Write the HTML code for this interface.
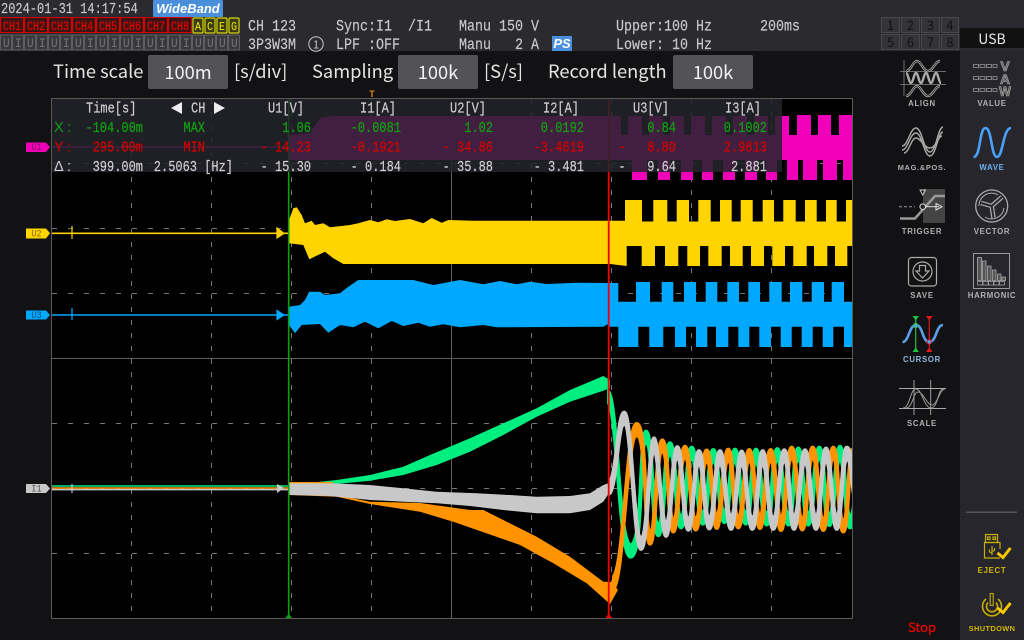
<!DOCTYPE html>
<html><head><meta charset="utf-8"><title>Wave</title>
<style>
html,body{margin:0;padding:0;background:#111;width:1024px;height:640px;overflow:hidden}
svg{display:block}
.m{font-family:"Liberation Mono","DejaVu Sans Mono",monospace}
.s{font-family:"Noto Sans CJK JP","Liberation Sans",sans-serif}
.l{font-family:"Liberation Sans",sans-serif;font-weight:bold;font-size:7.8px;letter-spacing:.7px;text-anchor:middle;fill:#b0b0b0}
</style></head><body>
<svg width="1024" height="640" viewBox="0 0 1024 640" xmlns="http://www.w3.org/2000/svg">
<defs><clipPath id="pc"><rect x="52" y="99" width="800" height="519"/></clipPath>
<path id="w1" fill="none" stroke-width="3.5" d="M607 383C618 383 618 560 630.7 559.7S639 429.7 646 429.7S652 535.3 658.3 535.3S664 443 670 443S675.5 526.3 681 526.3S686 448 691.7 448S697 522 702.7 522S708 450.7 713.3 450.7S719 520.3 724.3 520.3S730 450.3 735 450.3S740 522 745.7 522S751 450.3 756 450.3S761 523 766.7 523S772 449.7 777.3 449.7S783 523 788.3 523S793 449 798.3 449S803 523 808.3 523S814 448 819.3 448S824 523.7 829.3 523.7S835 447 840 447S845 526.3 850 526.3S854 500 856 470"/>
<path id="w2" fill="none" stroke-width="3.5" d="M612 597C624 597 626 421 636.7 421S644 545 650 545S656 439.7 662.3 439.7S668 531 673.3 531S679 447 685 447S690 528.7 695.7 528.7S701 451.3 706.7 451.3S712 527 716.7 527S723 450.3 728.3 450.3S733 526.3 738.3 526.3S744 450.7 749.3 450.7S755 527 760 527S765 450.7 770.7 450.7S776 529.3 781 529.3S786 448 791.7 448S797 528.7 802.3 528.7S807 448 812.7 448S818 529.3 823.3 529.3S828 448 833.3 448S838 531 843.3 531S848 450 853 450"/>
<path id="w3" fill="none" stroke-width="3.5" d="M608 488C617 488 617 408 624.3 408S634 551 641 551S649 437.5 654 437.5S661 536 666 536S672 447.5 677.3 447.5S683 529 688.3 529S694 452 699 452S704 527.5 709.3 527.5S715 452 720 452S726 528 731 528S737 452.5 741.7 452.5S747 528 752.3 528S758 452 762.7 452S768 528 773.3 528S779 451 784.3 451S789 528 794 528S800 451 805 451S811 528 816 528S821 449 826 449S832 528 836.7 528S842 448 846.7 448S851 470 854 490"/>
</defs>
<rect width="1024" height="640" fill="#121214"/>
<rect x="960" y="51" width="64" height="589" fill="#26262c"/>
<rect width="1024" height="51" fill="#2a2a2f"/>

<!-- top bar -->
<g class="m" font-size="12" fill="#c8c8c8" stroke="#c8c8c8" stroke-width=".15"><g transform="translate(1,13) scale(1,1.25)"><text>2024-01-31 14:17:54</text></g></g>
<rect x="153" y="0" width="70" height="17" rx="1" fill="#4a8fdc"/>
<text x="188" y="13" text-anchor="middle" font-family="Liberation Sans,sans-serif" font-style="italic" font-weight="bold" font-size="13" fill="#fff">WideBand</text>
<g fill="#3c1414" stroke="#d80000" stroke-width="1">
<rect x="0.5" y="17.5" width="23" height="15"/><rect x="24.5" y="17.5" width="23" height="15"/><rect x="48.5" y="17.5" width="23" height="15"/><rect x="72.5" y="17.5" width="23" height="15"/><rect x="96.5" y="17.5" width="23" height="15"/><rect x="120.5" y="17.5" width="23" height="15"/><rect x="144.5" y="17.5" width="23" height="15"/><rect x="168.5" y="17.5" width="23" height="15"/>
</g>
<g class="m" font-size="10" fill="#e00000" stroke="#e00000" stroke-width=".2" text-anchor="middle">
<g transform="translate(0,30) scale(1,1.25)"><text x="12">CH1</text><text x="36">CH2</text><text x="60">CH3</text><text x="84">CH4</text><text x="108">CH5</text><text x="132">CH6</text><text x="156">CH7</text><text x="180">CH8</text></g>
</g>
<g fill="#3a3a14" stroke="#d8d800" stroke-width="1.2">
<rect x="193" y="18" width="10" height="15" rx="1"/><rect x="205" y="18" width="10" height="15" rx="1"/><rect x="217" y="18" width="10" height="15" rx="1"/><rect x="229" y="18" width="10" height="15" rx="1"/>
</g>
<g class="m" font-size="10" fill="#f0f000" text-anchor="middle"><g transform="translate(0,30) scale(1,1.15)"><text x="198">A</text><text x="210">C</text><text x="222">E</text><text x="234">G</text></g></g>
<path fill="#3a3a3e" stroke="#5e5e62" d="M.5 35h11v15h-11zM12.5 35h11v15h-11zM24.5 35h11v15h-11zM36.5 35h11v15h-11zM48.5 35h11v15h-11zM60.5 35h11v15h-11zM72.5 35h11v15h-11zM84.5 35h11v15h-11zM96.5 35h11v15h-11zM108.5 35h11v15h-11zM120.5 35h11v15h-11zM132.5 35h11v15h-11zM144.5 35h11v15h-11zM156.5 35h11v15h-11zM168.5 35h11v15h-11zM180.5 35h11v15h-11zM192.5 35h11v15h-11zM204.5 35h11v15h-11zM216.5 35h11v15h-11zM228.5 35h11v15h-11z"/>
<g class="m" font-size="11" fill="#777"><g transform="translate(0,47) scale(1,1.2)"><text x="3 15 27 39 51 63 75 87 99 111 123 135 147 159 171 183 195 207 219 231">UIUIUIUIUIUIUIUIUUUU</text></g></g>
<g class="m" font-size="13.33" fill="#c8c8c8" stroke="#c8c8c8" stroke-width=".15">
<g transform="translate(0,30.5) scale(1,1.2)"><text x="248">CH 123</text><text x="336" xml:space="preserve">Sync:I1  /I1</text><text x="459">Manu 150 V</text><text x="616">Upper:100 Hz</text><text x="760">200ms</text></g>
<g transform="translate(0,49) scale(1,1.2)"><text x="248">3P3W3M</text><text x="336">LPF :OFF</text><text x="459" xml:space="preserve">Manu   2 A</text><text x="616">Lower: 10 Hz</text></g>
</g>
<circle cx="316" cy="44" r="7.2" fill="none" stroke="#c8c8c8" stroke-width="1"/>
<text x="316" y="48.5" text-anchor="middle" class="s" font-size="11" fill="#c8c8c8">1</text>
<rect x="552" y="36" width="20" height="15" fill="#4a8fdc"/>
<text x="562" y="48" text-anchor="middle" font-family="Liberation Sans,sans-serif" font-style="italic" font-weight="bold" font-size="13" fill="#fff">PS</text>
<path fill="#333338" stroke="#47474c" d="M881.5 17.5h18v15h-18zM901.5 17.5h18v15h-18zM921.5 17.5h18v15h-18zM941.5 17.5h17v15h-17zM881.5 34.5h18v15h-18zM901.5 34.5h18v15h-18zM921.5 34.5h18v15h-18zM941.5 34.5h17v15h-17z"/>
<g class="s" font-size="13" fill="#121214" text-anchor="middle"><text x="890.5" y="30">1</text><text x="910.5" y="30">2</text><text x="930.5" y="30">3</text><text x="950" y="30">4</text><text x="890.5" y="47">5</text><text x="910.5" y="47">6</text><text x="930.5" y="47">7</text><text x="950" y="47">8</text></g>
<rect x="960" y="28" width="64" height="20" fill="#111"/>
<text x="992" y="44" text-anchor="middle" class="s" font-size="14" fill="#e8e8e8">USB</text>

<!-- controls row -->
<g class="s" font-size="18.3" fill="#e4e4e4">
<text x="53" y="78">Time scale</text><text x="234" y="78">[s/div]</text><text x="312" y="78">Sampling</text><text x="484" y="78">[S/s]</text><text x="548" y="78">Record length</text>
</g>
<g fill="#525257"><rect x="148" y="55" width="80" height="34" rx="2"/><rect x="398" y="55" width="80" height="34" rx="2"/><rect x="673" y="55" width="80" height="34" rx="2"/></g>
<g class="s" font-size="18.3" fill="#f2f2f2" text-anchor="middle"><text x="188" y="79">100m</text><text x="438" y="79">100k</text><text x="713" y="79">100k</text></g>
<text x="372" y="97" text-anchor="middle" font-family="Liberation Sans,sans-serif" font-weight="bold" font-size="9" fill="#e08a10">T</text>

<!-- plot -->
<rect x="51.5" y="98.5" width="801" height="520" fill="#000" stroke="#5a5a5a"/>
<g stroke="#777" stroke-width="1" fill="none" stroke-dasharray="5 11">
<path d="M52 163.5H852M52 228.5H852M52 293.5H852M52 423.5H852M52 488.5H852M52 553.5H852"/>
</g>
<g stroke="#777" stroke-width="1" fill="none" stroke-dasharray="5 8">
<path d="M131.5 99V618M211.5 99V618M291.5 99V618M371.5 99V618M531.5 99V618M611.5 99V618M691.5 99V618M771.5 99V618"/>
</g>
<path d="M52 358.5H852M451.5 99V618" stroke="#5e5e5e" stroke-width="1" fill="none"/>

<g clip-path="url(#pc)">
<!-- U1 -->
<path d="M52 147H289" stroke="#ff00c0" stroke-width="1.4"/>
<path fill="#f000b8" d="M289 135L310 133L320 118L333 116H621V135H852V160H289zM628 116H642V135H628zM649 116H663V135H649zM670 116H684V135H670zM691 116H705V135H691zM712 116H726V135H712zM733 116H747V135H733zM754 116H768V135H754zM775 116H789V135H775zM797 115H811V135H797zM818 115H831V135H818zM839 115H852V135H839zM632 158H647V180H632zM658 158H670V180H658zM681 158H693V180H681zM702 158H713V180H702zM723 158H735V180H723zM745 158H757V180H745zM766 158H777V180H766zM787 158H798V180H787zM803 158H817V180H803zM823 158H837V180H823zM843 158H852V180H843z"/>
<!-- U2 -->
<path d="M52 233.3H282" stroke="#ffd000" stroke-width="1.6"/>
<path d="M72 226V239M277 228L284 233.3L277 238z" stroke="#ffd000" stroke-width="1.2" fill="#ffd000"/>
<path d="M282 233.3H289" stroke="#ffd000" stroke-width="1.6"/>
<path fill="#ffd400" d="M289 220L293.3 208.3L296.7 207.3L301.7 215L305 223.3L311.7 220.7L315 225L323.3 223.3L330 227.3L350 225L358.3 223.3L370 220L378.3 222.3L386.7 219.3L395 221L410 219L423.3 223.3L431.7 218L441.7 222.7L448.3 220L473.3 220.7H625V200H642V221.5H653.3V200H667.3V221.5H676.7V200H689V221.5H698.3V200H710.7V221.5H720V200H731.7V221.5H740.7V200H752.7V221.5H762.7V200H774V221.5H783.3V200H795.7V221.5H805V200H816.7V221.5H826V200H836.7V221.5H846V200H853V246H847.3V266H835V246H827.3V266H814V246H806.7V266H793.3V246H785V266H772.3V246H764V266H751V246H742.7V266H730V246H721.7V266H708.3V246H700V266H687.3V246H678.3V266H665V246H655V266H641.7V246H626.7V266L610 264H353.3L343.3 264L333.3 258.3L325 251.7L309.3 259.3L303.3 245L289 243.3z"/>
<!-- U3 -->
<path d="M52 315H289" stroke="#00a8ff" stroke-width="1.6"/>
<path d="M72 308V320M277 310.5L284 315L277 319.5z" stroke="#00a8ff" stroke-width="1.2" fill="#00a8ff"/>
<path fill="#00a8ff" d="M289 306.7L300 305L305 300L309.3 291.7L320 291.7L325 295L340 293.3L348.3 286.7L358.3 280L413.3 280L433.3 285L460 280L483.3 284.3L500 281L516.7 284.3L530 281.7L546.7 284L576.7 282.7L608 283H618.3V301.7H636V282H650V301.7H661.7V282H673.3V301.7H684V282H696V301.7H705.7V282H717.3V301.7H727.3V282H739V301.7H748.3V282H760V301.7H769.3V282H781.7V301.7H790V282H802.3V301.7H811.7V282H824V301.7H831.7V282H844V301.7H853V347H844V326.7H833.3V347H822.7V326.7H812.7V347H801.7V326.7H791.7V347H780.7V326.7H771V347H759.3V326.7H749.3V347H738.3V326.7H728.3V347H716V326.7H707.3V347H696V326.7H686V347H675V326.7H663.3V347H649.3V326.7H638.3V347H618.3V326.7H610L608.3 324L603.3 326.7L496.7 327.3L483.3 325L460 327.3L443.3 324.3L430 326.7L418.3 322.7L403.3 326L391.7 321L378.3 328.3L365 321.7L353.3 327.3L340 325L328.3 332.7L320 324L301.7 325L295 333.3L289 325z"/>
<!-- I1 baseline -->
<path d="M52 489.6H289" stroke="#c8c8c8" stroke-width="1.6"/>
<path d="M52 488H289" stroke="#ff9000" stroke-width="1.4"/>
<path d="M52 486H289" stroke="#00ee80" stroke-width="1.6"/>
<path d="M72 484V493" stroke="#c8c8c8" stroke-width="1.2"/>
<path d="M277 484L284 488L277 493z" fill="#c8c8c8"/>
<!-- green -->
<path fill="#00ee80" d="M289 485L336.7 480L370 475L403.3 466.7L430 455L470 438.3L503.3 423.3L536.7 408.3L570 390L603.3 376L610 380V388L603.3 390.7L570 401.7L536.7 416.7L503.3 435L470 451.7L436.7 465L403.3 475L370 480.7L336.7 484L289 488z"/>
<g stroke="#00ee80" transform="translate(0,61.25) scale(1,.875)"><use href="#w1" y="-7"/><use href="#w1" y="-3.500"/><use href="#w1"/><use href="#w1" y="3.500"/><use href="#w1" y="7"/></g>
<!-- orange -->
<path fill="#ff9400" d="M289 482L333 482L336.7 495L370 501.7L420 503L470 510L483.3 510L503.3 520L536.7 536.7L570 556.7L603.3 581.7L612 582L618 590L610 604L586.7 583.3L553.3 563.3L520 545L453.3 521.7L420 511.7L370 504L336.7 496.7L289 495z"/>
<g stroke="#ff9400" transform="translate(0,61.25) scale(1,.875)"><use href="#w2" y="-7"/><use href="#w2" y="-3.500"/><use href="#w2"/><use href="#w2" y="3.500"/><use href="#w2" y="7"/></g>
<!-- gray -->
<path fill="#c8c8c8" d="M289 483.3L330 483.3L370 485L403.3 488.3L436.7 491.7L476.7 493.3L510 495L536.7 496.7L570 496L590 493.3L603.3 485L609 483V493L603.3 501.7L590 510L570 513.3L536.7 513.3L503.3 510L470 506L436.7 503.3L403.3 501.7L370 500L330 496L289 495z"/>
<g stroke="#c8c8c8" transform="translate(0,61.25) scale(1,.875)"><use href="#w3" y="-7"/><use href="#w3" y="-3.500"/><use href="#w3"/><use href="#w3" y="3.500"/><use href="#w3" y="7"/></g>
</g>

<!-- cursors -->
<path d="M288.7 99V618" stroke="#0aa00a" stroke-width="1.6"/>
<path d="M608.7 99V618" stroke="#f00000" stroke-width="1.8"/>
<path d="M285.5 618L288.7 613.5L292 618z" fill="#0aa00a"/>
<path d="M605.5 618L608.7 613.5L612 618z" fill="#f00000"/>

<!-- readout panel -->
<rect x="52" y="99" width="730" height="73" fill="#24242c" fill-opacity=".86"/>
<g class="m" font-size="12">
<g transform="translate(0,112.5) scale(1,1.25)" fill="#d0d0d0" stroke="#d0d0d0" stroke-width=".15">
<text x="86">Time[s]</text><text x="191">CH</text><text x="268">U1[V]</text><text x="360">I1[A]</text><text x="450">U2[V]</text><text x="543">I2[A]</text><text x="633">U3[V]</text><text x="725">I3[A]</text>
</g>
<g transform="translate(0,132) scale(1,1.25)" fill="#10a010" stroke="#10a010" stroke-width=".2" text-anchor="end">
<text x="143">-104.00m</text><text x="205">MAX</text><text x="311">1.06</text><text x="401">-0.0081</text><text x="493">1.02</text><text x="584">0.0192</text><text x="676">0.84</text><text x="767">0.1002</text>
</g>
<g transform="translate(0,151.5) scale(1,1.25)" fill="#d40000" stroke="#d40000" stroke-width=".2" text-anchor="end" xml:space="preserve">
<text x="143">295.00m</text><text x="205">MIN</text><text x="311">- 14.23</text><text x="401">-0.1921</text><text x="493">- 34.86</text><text x="584">-3.4619</text><text x="676" xml:space="preserve">-   8.80</text><text x="767">2.9813</text>
</g>
<g transform="translate(0,171) scale(1,1.25)" fill="#d0d0d0" stroke="#d0d0d0" stroke-width=".15" text-anchor="end">
<text x="143">399.00m</text><text x="233">2.5063 [Hz]</text><text x="311">- 15.30</text><text x="401">- 0.184</text><text x="493">- 35.88</text><text x="584">- 3.481</text><text x="676" xml:space="preserve">-   9.64</text><text x="767">2.881</text>
</g>
</g>
<g font-family="Liberation Sans,sans-serif" font-size="14.5">
<text x="54" y="132" fill="#10a010">X</text><text x="67" y="132" fill="#10a010">:</text>
<text x="54" y="151.5" fill="#d40000">Y</text><text x="67" y="151.5" fill="#d40000">:</text>
<text x="54" y="171" fill="#d0d0d0">Δ</text><text x="67" y="171" fill="#d0d0d0">:</text>
</g>
<path d="M182 102V114L171 108zM214 102V114L225 108z" fill="#eee"/>

<!-- channel tags -->
<path d="M26 142.5H46L50 147L46 152H26z" fill="#f000b8"/>
<path d="M26 228.5H46L50 233.3L46 238.5H26z" fill="#ffd400"/>
<path d="M26 310.5H46L50 315L46 319.5H26z" fill="#00a8ff"/>
<path d="M26 484H46L50 488.5L46 493H26z" fill="#c8c8c8"/>
<g class="m" font-size="8.5" text-anchor="middle">
<g transform="translate(36.5,150) scale(1,1.2)" fill="#8a0068"><text>U1</text></g>
<g transform="translate(36.5,236.5) scale(1,1.2)" fill="#806a00"><text>U2</text></g>
<g transform="translate(36.5,318) scale(1,1.2)" fill="#00507a"><text>U3</text></g>
<g transform="translate(36.5,491.5) scale(1,1.2)" fill="#555"><text>I1</text></g>
</g>

<!-- ALIGN -->
<path d="M904 60V96M900 71.5H946M900 84.5H946" stroke="#888" stroke-width=".8" fill="none"/>
<g fill="none" stroke="#aaa" stroke-width="2.4">
<path d="M906 71C911 71 913 61 917 61S923 71 928 71S935 61 940 61"/>
<path d="M906 73C908 73 909 83 911 83S914 73 916 73S919 83 921 83S924 73 926 73S929 83 931 83S934 73 936 73S939 83 941 83"/>
<path d="M906 96C911 96 913 86 917 86S923 96 928 96S935 86 940 86"/>
</g>
<g fill="none" stroke="#222" stroke-width=".8">
<path d="M906 71C911 71 913 61 917 61S923 71 928 71S935 61 940 61"/>
<path d="M906 96C911 96 913 86 917 86S923 96 928 96S935 86 940 86"/>
</g>
<text x="922" y="106" class="l">ALIGN</text>
<!-- MAG&POS -->
<g fill="none" stroke="#aaa" stroke-width="1.4">
<path d="M902 146C908 146 910 128 916 128S924 152 930 152S938 127 943 127"/>
<path d="M902 150C908 150 910 133 916 133S924 156 930 156S938 132 943 132"/>
<path d="M904 153C909 153 911 138 916 138S924 148 930 148S938 136 942 136"/>
</g>
<text x="922" y="170" class="l" style="font-size:7.4px">MAG.&amp;POS.</text>
<!-- TRIGGER -->
<rect x="923" y="189" width="22" height="34" fill="#444"/>
<path d="M899 206.7H915" stroke="#999" stroke-width="1" stroke-dasharray="3 2" fill="none"/>
<path d="M900 218.5H915L935 196H945" stroke="#999" stroke-width="2.6" fill="none"/>
<path d="M923 206.7H939" stroke="#ddd" stroke-width="1" fill="none"/>
<path d="M936 203.5L942 206.7L936 210z" fill="none" stroke="#ddd"/>
<circle cx="922.7" cy="206.7" r="2.8" fill="#222" stroke="#ddd"/>
<path d="M920 190H925.5L922.7 195z" fill="none" stroke="#ccc"/>
<text x="922" y="234" class="l">TRIGGER</text>
<!-- SAVE -->
<rect x="908.5" y="257.5" width="28" height="28.5" rx="3" fill="none" stroke="#aaa" stroke-width="1.2"/>
<circle cx="922.5" cy="271.5" r="9.5" fill="none" stroke="#aaa" stroke-width="1.2"/>
<path d="M919.5 265.5H925.5V271H929L922.5 278L916 271H919.5z" fill="none" stroke="#aaa" stroke-width="1.2"/>
<text x="922" y="298" class="l">SAVE</text>
<!-- CURSOR -->
<path d="M902.5 342C909 342 909 325 916 325S922 342 929.3 342S936 325 943 325" fill="none" stroke="#5a9fe8" stroke-width="2.6"/>
<path d="M915.7 318V351" stroke="#22c040" stroke-width="1.2"/>
<path d="M929.3 318V351" stroke="#e01818" stroke-width="1.2"/>
<path d="M912.5 316H919L915.7 320.5zM912.5 352H919L915.7 347.5z" fill="#22c040"/>
<path d="M926 316H932.6L929.3 320.5zM926 352H932.6L929.3 347.5z" fill="#e01818"/>
<circle cx="915.7" cy="325.5" r="2.2" fill="#5a9fe8" stroke="#22c040"/>
<circle cx="929.3" cy="342" r="2.2" fill="#5a9fe8" stroke="#e01818"/>
<text x="922" y="362" class="l" style="fill:#8fb8e0">CURSOR</text>
<!-- SCALE -->
<path d="M899 388.5H946M899 408.5H946M914 380V415M930.7 380V415" stroke="#aaa" stroke-width=".9" fill="none"/>
<g fill="none" stroke="#999" stroke-width="1">
<path d="M903 408C910 408 910 389 916 389S924 408 931 408S938 389 943 389"/>
<path d="M906 408C913 408 913 392 918 392S927 405 932 405S940 389 945 389"/>
</g>
<text x="922" y="426" class="l">SCALE</text>

<!-- VALUE -->
<path d="M973.5 64.5h5v3h-5zM980 64.5h5v3h-5zM986.5 64.5h5v3h-5zM993 64.5h4v3h-4zM973.5 76.5h5v3h-5zM980 76.5h5v3h-5zM986.5 76.5h5v3h-5zM993 76.5h4v3h-4zM973.5 88.5h5v3h-5zM980 88.5h5v3h-5zM986.5 88.5h5v3h-5zM993 88.5h4v3h-4z" fill="none" stroke="#999" stroke-width=".8"/>
<g font-family="Liberation Sans,sans-serif" font-weight="bold" font-size="14" fill="#666" stroke="#aaa" stroke-width=".6" text-anchor="middle"><text x="1005" y="71">V</text><text x="1005" y="84">A</text><text x="1005" y="96" textLength="12" lengthAdjust="spacingAndGlyphs">W</text></g>
<text x="992" y="106" class="l">VALUE</text>
<!-- WAVE -->
<path d="M973.5 157C981 157 979 128 985.5 128S991 157 997 157S1003 128 1011 128" fill="none" stroke="#4aa0f8" stroke-width="2.6"/>
<text x="992" y="170" class="l" style="fill:#6ab0f0">WAVE</text>
<!-- VECTOR -->
<circle cx="991.7" cy="206" r="16" fill="none" stroke="#aaa" stroke-width="1.3"/>
<path d="M979 206A12.5 12.5 0 0 1 998 195M1004 208A12.5 12.5 0 0 1 985 217" fill="none" stroke="#aaa" stroke-width="1"/>
<path d="M991.7 206L1002 197M991.7 206L993.5 218M991.7 206L981 203" stroke="#aaa" stroke-width="4.5" fill="none"/>
<path d="M991.7 206L1002 197M991.7 206L993.5 218M991.7 206L981 203" stroke="#26262c" stroke-width="2" fill="none"/>
<text x="992" y="234" class="l">VECTOR</text>
<!-- HARMONIC -->
<rect x="973.5" y="253.5" width="36" height="35" fill="none" stroke="#999" stroke-width="1"/>
<path d="M977.5 257.5h4v23h-4zM982.5 261h3.5v19.5h-3.5zM987.5 266h3.5v14.5h-3.5zM992.5 270h3.5v10.5h-3.5zM997.5 274h3.5v6.5h-3.5zM1002 277h3.5v3.5h-3.5z" fill="#555" stroke="#aaa" stroke-width=".8"/>
<path d="M977.5 281.5h5v3.5h-5zM983 281.5h5v3.5h-5zM988.5 281.5h5v3.5h-5zM994 281.5h5v3.5h-5zM999.5 281.5h5v3.5h-5z" fill="none" stroke="#aaa" stroke-width=".7"/>
<text x="992" y="298" class="l">HARMONIC</text>

<rect x="966" y="511.5" width="51" height="1.5" fill="#555"/>
<!-- EJECT -->
<g fill="none" stroke="#c8ac00" stroke-width="1.2">
<rect x="985.5" y="534.5" width="12" height="8"/>
<rect x="987.5" y="537" width="2.5" height="2.5"/><rect x="993" y="537" width="2.5" height="2.5"/>
<path d="M1000 549V542.5H984.5V558H1000"/>
<path d="M992 546V555M989.5 549.5V552L992 553M994.5 548V550.5L992 551.5"/>
</g>
<path d="M997.5 553L1003 557.5L1010.5 548" fill="none" stroke="#f8c800" stroke-width="3"/>
<text x="992" y="573" class="l" style="fill:#d4b800">EJECT</text>
<!-- SHUTDOWN -->
<path d="M986 599A9.5 9.5 0 1 0 998 599M988 602.5A5.5 5.5 0 1 0 996 602.5" fill="none" stroke="#c8ac00" stroke-width="1.6"/>
<path d="M990.2 593.5h3v12h-3z" fill="#26262c" stroke="#c8ac00" stroke-width="1.1"/>
<path d="M997.5 608L1003 612.5L1010.5 603" fill="none" stroke="#f8c800" stroke-width="3"/>
<text x="992" y="631" class="l" style="fill:#d4b800;font-size:7.4px;letter-spacing:.4px">SHUTDOWN</text>

<text x="922" y="632" text-anchor="middle" class="s" font-size="13" fill="#f00000" stroke="#f00000" stroke-width=".25">Stop</text>
</svg>
</body></html>
